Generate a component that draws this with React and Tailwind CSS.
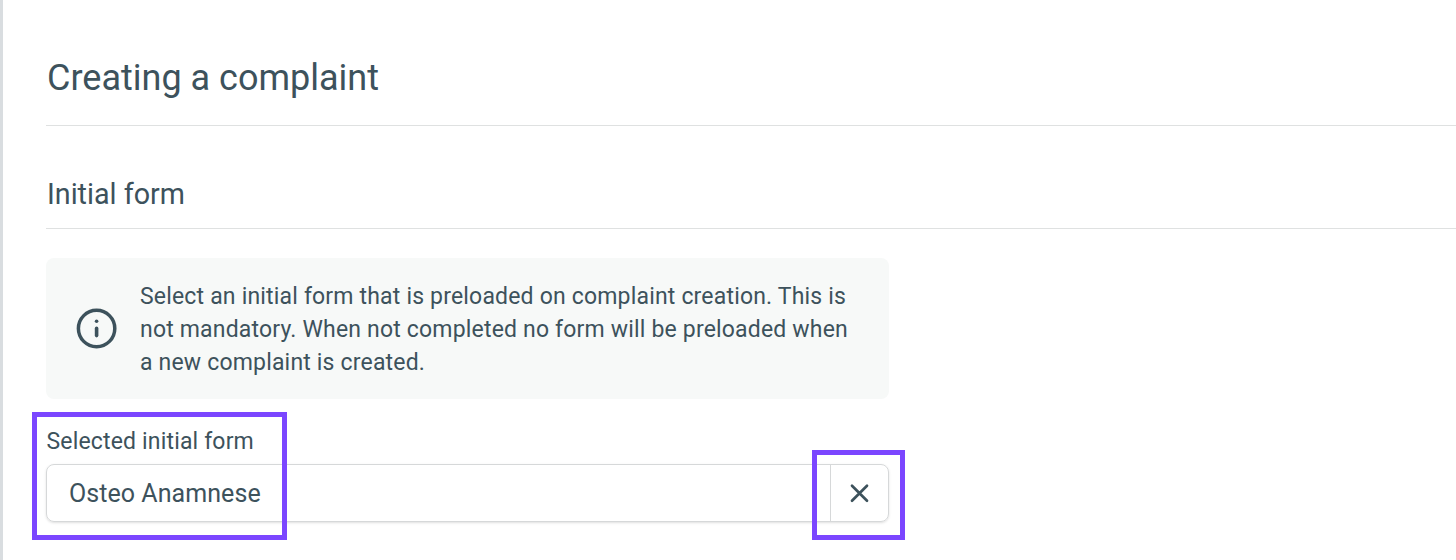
const INFO_LINES = [
  "Select an initial form that is preloaded on complaint creation. This is",
  "not mandatory. When not completed no form will be preloaded when",
  "a new complaint is created.",
];

function InfoIcon() {
  return (
    <svg width="40" height="40" viewBox="0 0 40 40" fill="none" className="shrink-0 overflow-visible">
      <circle cx="19.6" cy="19.5" r="18.2" stroke="currentColor" strokeWidth="3.5" />
      <circle cx="19.6" cy="12.2" r="1.8" fill="currentColor" />
      <path d="M19.6 19.4V26.6" stroke="currentColor" strokeWidth="3.6" strokeLinecap="round" />
    </svg>
  );
}

function CloseIcon() {
  return (
    <svg width="20" height="20" viewBox="0 0 20 20" fill="none">
      <path
        d="M2 2.8L17 17.8M17 2.8L2 17.8"
        stroke="currentColor"
        strokeWidth="2.7"
        strokeLinecap="round"
      />
    </svg>
  );
}

export default function App() {
  return (
    <main className="h-[560px] overflow-hidden border-l-[3px] border-[#d9dde0] bg-white pl-[43px] font-['Roboto',sans-serif] text-[#3d525c]">
      <h1 className="h-[126px] border-b border-[#dfe1e1] pt-[54px] pl-px text-[36px] leading-[48px]">
        Creating a complaint
      </h1>
      <h2 className="h-[103px] border-b border-[#dfe1e1] pt-[50px] pl-px text-[28.7px] leading-[36px]">
        Initial form
      </h2>

      {/* Info box */}
      <div className="mt-[29px] flex h-[141px] w-[843px] items-center rounded-lg bg-[#f7f9f8] pl-[31px]">
        <InfoIcon />
        <p className="mt-[2px] ml-[23px] text-[23px] leading-[33px] tracking-[0.18px] whitespace-nowrap">
          {INFO_LINES.map((line) => (
            <span key={line} className="block">
              {line}
            </span>
          ))}
        </p>
      </div>

      {/* Selected form */}
      <div className="relative w-[843px] pt-[26px]">
        <label className="block pl-[0.5px] text-[23px] leading-[34px] tracking-[0.165px]">
          Selected initial form
        </label>
        <div className="mt-[5px] flex h-[58px] rounded-lg border border-[#d6d8d9] shadow-sm">
          <div className="flex flex-1 items-center pt-[2px] pl-[22px] text-[25px] tracking-[0.06px]">
            Osteo Anamnese
          </div>
          <button className="flex w-[58px] items-center justify-center border-l border-[#d6d8d9]">
            <CloseIcon />
          </button>
        </div>

        {/* Highlights */}
        <div className="absolute top-[13px] -left-[14px] h-[128px] w-[255px] border-[5px] border-[#7b46ff]" />
        <div className="absolute top-[51px] left-[766px] h-[90px] w-[93px] border-[5px] border-[#7b46ff]" />
      </div>
    </main>
  );
}
